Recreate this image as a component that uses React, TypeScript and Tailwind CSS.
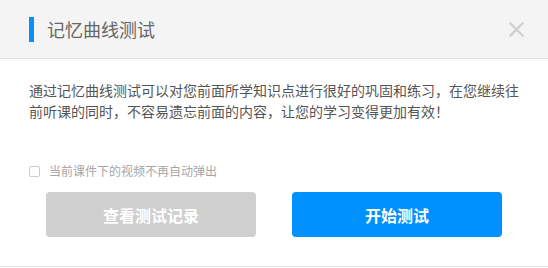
import React from 'react';

const App: React.FC = () => {
  return (
    <div className="w-[548px] h-[268px] bg-white overflow-hidden font-['Noto_Sans_CJK_SC','Noto_Sans',sans-serif]">
      {/* header */}
      <div className="h-[59px] bg-[#f4f4f4] border-b border-[#e2e2e2] flex items-center pl-[29px] pr-[24px]">
        <div className="w-[5px] h-[25px] bg-[#0a8ff8] mr-[13px]"></div>
        <h2 className="text-[18px] leading-[25px] text-[#666666]">记忆曲线测试</h2>
        <button className="ml-auto w-[16px] h-[16px] flex items-center justify-center">
          <svg width="15" height="15" viewBox="0 0 15 15">
            <path d="M1.5 1.5 L13.5 13.5 M13.5 1.5 L1.5 13.5" stroke="#d0d0d0" strokeWidth="2.4" strokeLinecap="square" />
          </svg>
        </button>
      </div>

      {/* body */}
      <div className="pt-[21px] pl-[29px] pr-[18px]">
        <p className="text-[14px] leading-[21px] text-[#555555]">
          通过记忆曲线测试可以对您前面所学知识点进行很好的巩固和练习，在您继续往前听课的同时，不容易遗忘前面的内容，让您的学习变得更加有效！
        </p>

        <label className="mt-[41px] h-[16px] flex items-center">
          <span className="w-[11px] h-[11px] border border-[#cccccc] rounded-[2px] bg-white"></span>
          <span className="ml-[9px] text-[12px] leading-[16px] text-[#a6a6a6]">当前课件下的视频不再自动弹出</span>
        </label>
      </div>

      <div className="mt-[13px] flex justify-center gap-[36px]">
        <button className="w-[210px] h-[45px] rounded-[4px] bg-[#cfcfcf] text-white text-[16px] font-bold">
          查看测试记录
        </button>
        <button className="w-[210px] h-[45px] rounded-[4px] bg-[#0090ff] text-white text-[16px] font-bold">
          开始测试
        </button>
      </div>

      <div className="mt-[29px] border-t border-[#e5e5e5]"></div>
    </div>
  );
};

export default App;
